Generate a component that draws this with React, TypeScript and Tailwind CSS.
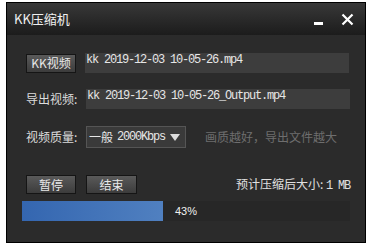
import React from 'react';

const cjk = "font-['Noto_Sans_CJK_SC','Noto_Sans',sans-serif]";
const mono = "font-['Liberation_Mono','Noto_Sans_CJK_SC',monospace]";

const DarkButton: React.FC<{ label: string; className?: string }> = ({ label, className = '' }) => (
  <button
    className={`h-[19px] w-[50px] flex items-center justify-center border border-[#151515] bg-gradient-to-b from-[#5a5a5a] to-[#3c3c3c] text-[12px] leading-none text-[#e8e8e8] ${cjk} ${className}`}
  >
    {label}
  </button>
);

const FileField: React.FC<{ value: string }> = ({ value }) => (
  <div
    className={`h-[20px] w-[264px] bg-[#3d3d3d] pl-[1px] pt-[1px] text-[12px] leading-[13px] tracking-[-1.2px] text-[#e6e6e6] whitespace-pre ${mono}`}
  >
    {value}
  </div>
);

export default function App() {
  return (
    <div className="w-[378px] h-[248px] bg-white pt-[2px] pl-[6px]">
      <div className="w-[360px] h-[241px] border border-black bg-[#2b2b2b] flex flex-col">
        {/* title bar */}
        <div className="h-[32px] flex items-center bg-gradient-to-b from-[#383838] via-[#2a2a2a] to-[#1c1c1c] pl-[7px] pr-[11px]">
          <span className={`text-[13px] text-[#f0f0f0] ${cjk}`}>KK压缩机</span>
          <div className="ml-auto flex items-center gap-[18px]">
            <div className="mt-[9px] h-[3px] w-[9px] bg-white" />
            <svg width="13" height="13" viewBox="0 0 13 13">
              <path d="M1.5 1.5 L11.5 11.5 M11.5 1.5 L1.5 11.5" stroke="white" strokeWidth="2.2" />
            </svg>
          </div>
        </div>

        <div className="flex flex-col pl-[19px] pr-[15px]">
          <div className="mt-[18px] flex items-center h-[20px]">
            <DarkButton label="KK视频" />
            <div className="ml-[9px]">
              <FileField value="kk 2019-12-03 10-05-26.mp4" />
            </div>
          </div>

          <div className="mt-[16px] flex items-center h-[20px]">
            <span className={`w-[60px] text-[12px] text-[#dcdcdc] ${cjk}`}>导出视频:</span>
            <FileField value="kk 2019-12-03 10-05-26_Output.mp4" />
          </div>

          <div className="mt-[17px] flex items-center h-[22px]">
            <span className={`w-[60px] text-[12px] text-[#dcdcdc] ${cjk}`}>视频质量:</span>
            <div className="h-[22px] w-[100px] flex items-center border border-[#555] bg-[#3a3a3a] pl-[2px] pr-[5px]">
              <span className={`text-[12px] text-[#e6e6e6] ${cjk}`}>一般</span>
              <span className={`ml-[4px] text-[12px] tracking-[-1.2px] text-[#e6e6e6] ${mono}`}>2000Kbps</span>
              <svg className="ml-auto" width="10" height="7" viewBox="0 0 10 7">
                <path d="M0 0 H10 L5 7 Z" fill="#dcdcdc" />
              </svg>
            </div>
            <span className={`ml-[19px] text-[12px] text-[#6e6e6e] ${cjk}`}>画质越好，导出文件越大</span>
          </div>

          <div className="mt-[27px] flex items-center h-[19px]">
            <DarkButton label="暂停" />
            <DarkButton label="结束" className="ml-[10px] w-[51px]" />
            <span className={`ml-auto text-[12px] text-[#e0e0e0] ${cjk}`}>
              预计压缩后大小: <span className={`text-[12px] tracking-[-1.2px] ${mono}`}>1 MB</span>
            </span>
          </div>
        </div>

        <div className="mt-[7px] ml-[15px] mr-[15px] h-[20px] bg-[#272727] flex items-center">
          <div className="h-full w-[141px] bg-gradient-to-r from-[#3466b0] to-[#5080c0]" />
          <span className="ml-[12px] text-[11px] text-[#f0f0f0] font-['Liberation_Sans',sans-serif]">43%</span>
        </div>
      </div>
    </div>
  );
}
